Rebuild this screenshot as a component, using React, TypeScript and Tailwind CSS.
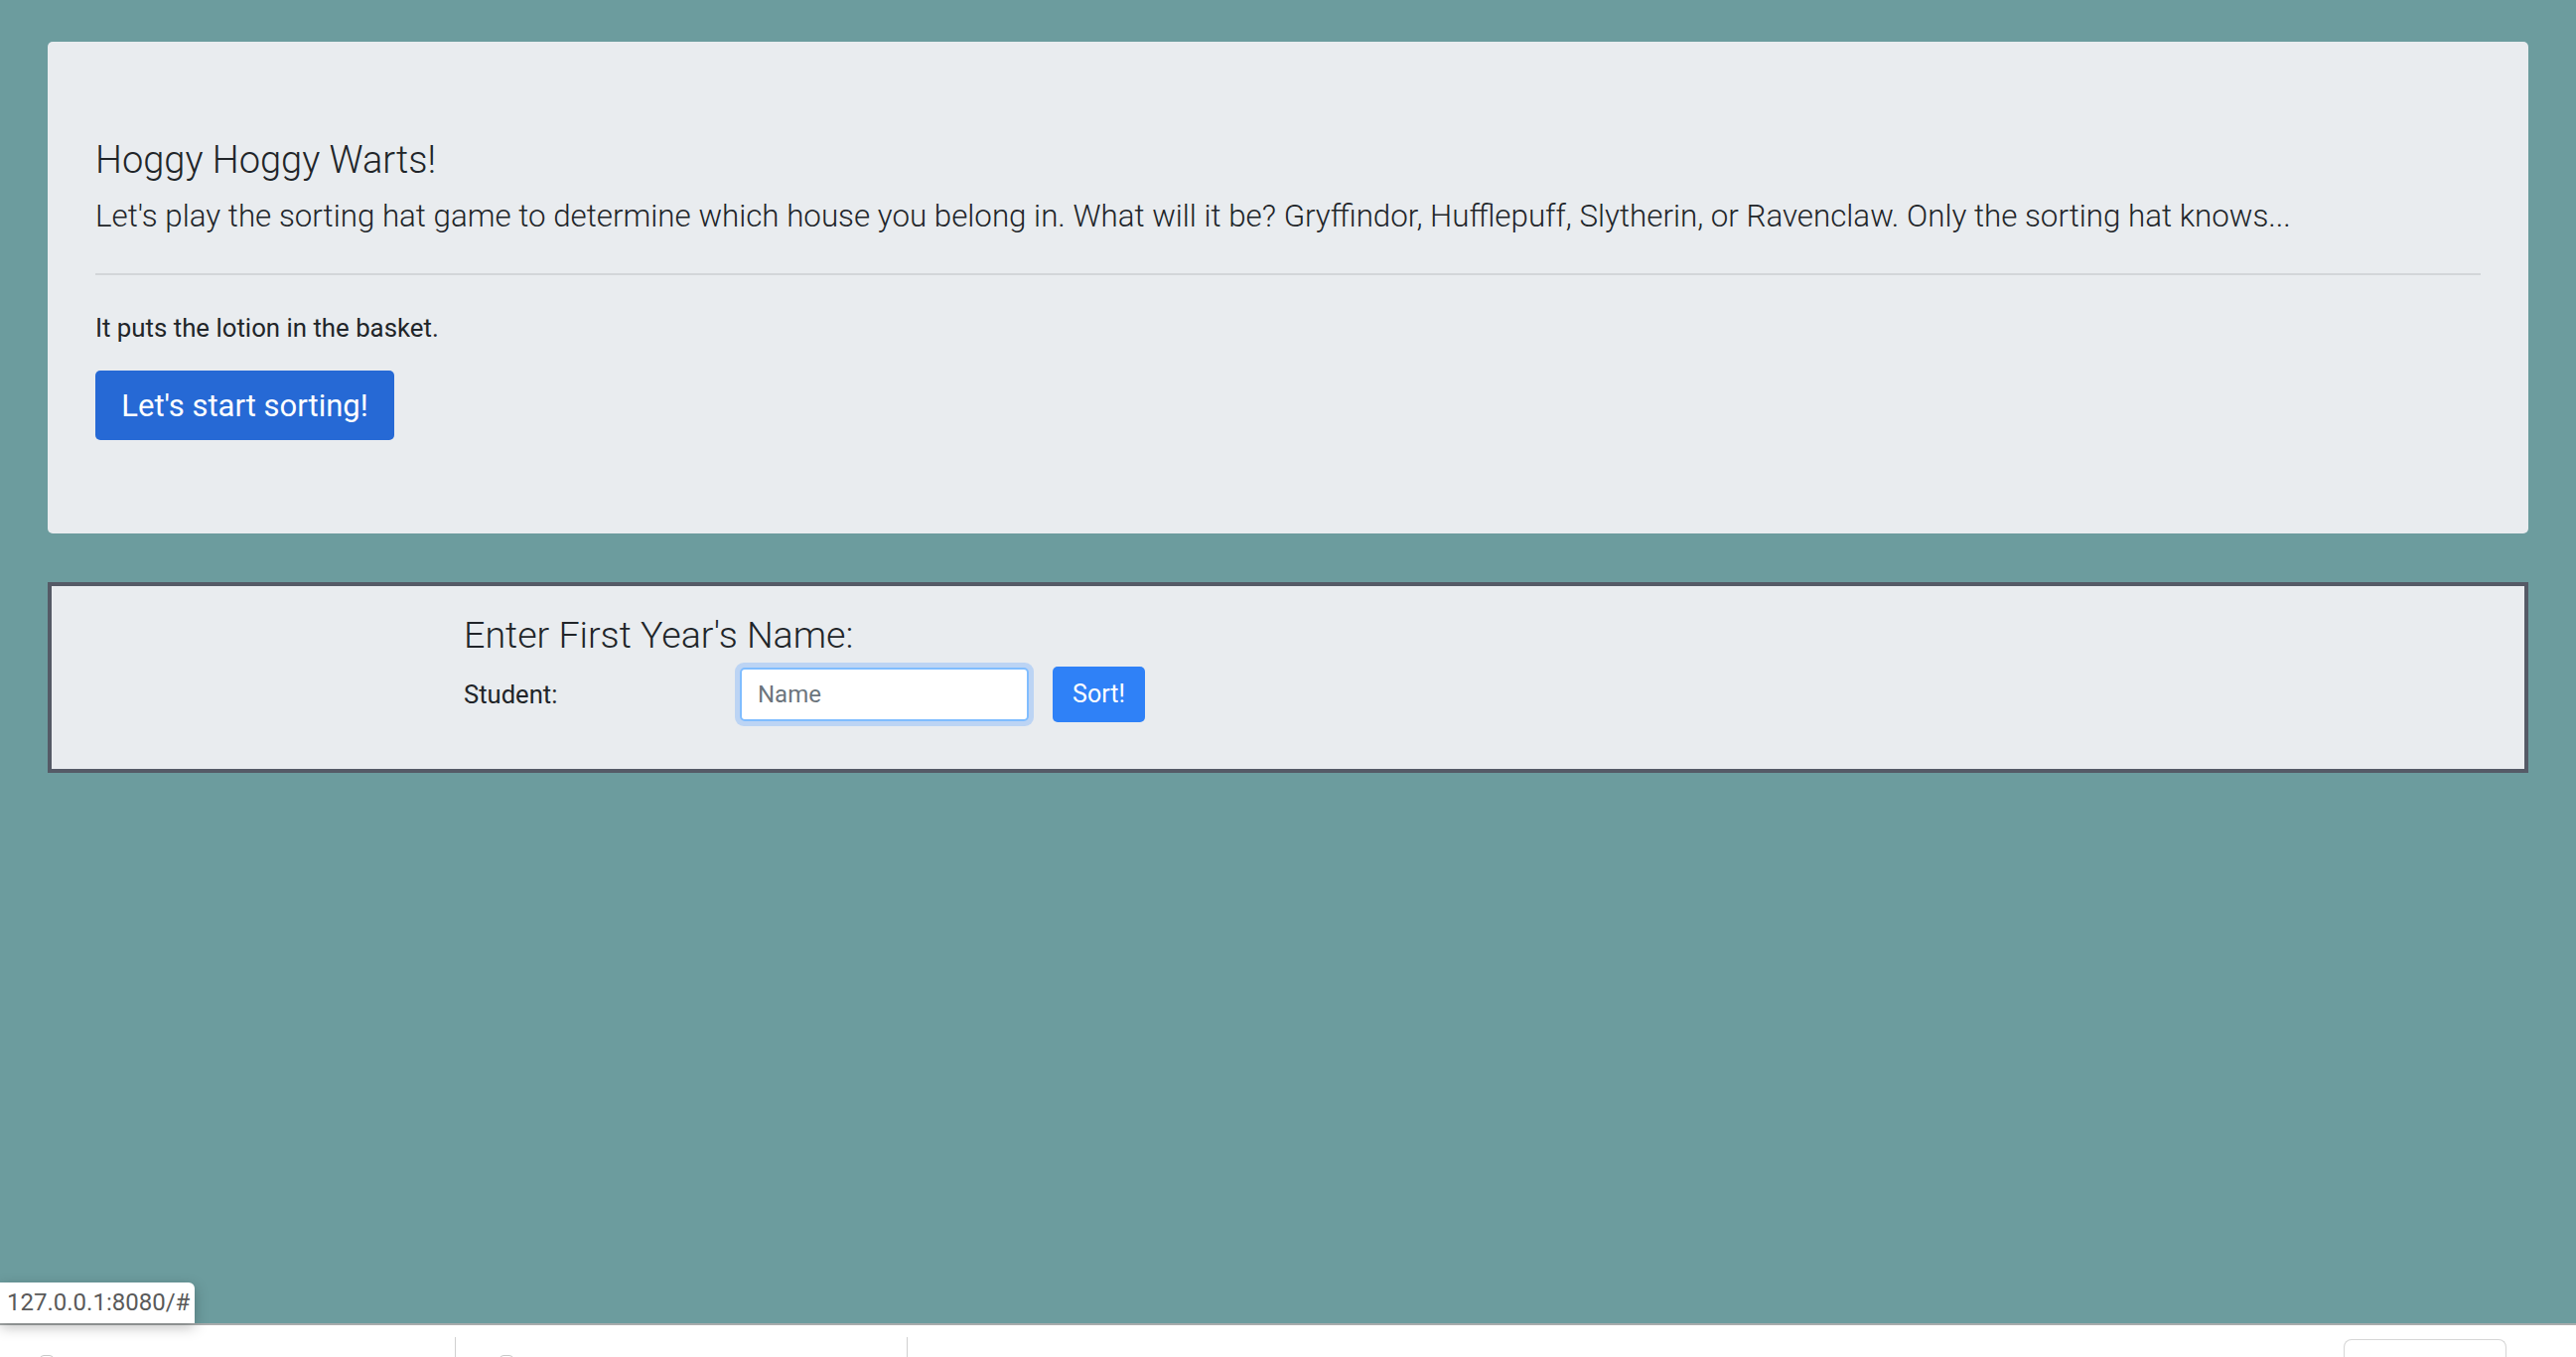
import React from "react";

const font = { fontFamily: "Roboto, 'Liberation Sans', sans-serif" };

const Jumbotron = () => {
  return (
    <div className="bg-[#e9ecef] rounded-[5px] h-[495px] px-[48px] pt-[97px]">
      <h1 className="text-[38px] leading-[44px] font-light text-[#212529]">Hoggy Hoggy Warts!</h1>
      <p className="mt-[10px] text-[31.3px] leading-[50px] font-light text-[#212529]">
        Let's play the sorting hat game to determine which house you belong in. What will it be? Gryffindor,
        Hufflepuff, Slytherin, or Ravenclaw. Only the sorting hat knows...
      </p>
      <hr className="mt-[32px] border-t-2 border-[#d3d6d9]" />
      <p className="mt-[34px] text-[25.8px] leading-[39px] text-[#212529]">It puts the lotion in the basket.</p>
      <button className="mt-[23px] h-[70px] w-[301px] rounded-[5px] bg-[#2669d5] pt-[2px] text-white text-[31px] flex items-center justify-center">
        Let's start sorting!
      </button>
    </div>
  );
};

const SortForm = () => {
  return (
    <div className="mt-[49px] h-[192px] border-4 border-[#555a66] bg-[#e9ecef] pl-[415px] pt-[28px]">
      <h3 className="text-[37.6px] leading-[43px] font-light text-[#212529]">Enter First Year's Name:</h3>
      <div className="mt-[6px] flex items-center">
        <label className="w-[273px] text-[25.6px] text-[#212529]">Student:</label>
        <div className="rounded-[9px] bg-[#bcd4f4] p-[5px]">
          <input
            className="h-[54px] w-[291px] rounded-[5px] border-2 border-[#80bdff] bg-white px-[16px] text-[24px] text-[#495057] placeholder:text-[#6c757d] outline-none"
            placeholder="Name"
            style={font}
          />
        </div>
        <button className="ml-[19px] h-[56px] w-[93px] rounded-[5px] bg-[#2f81f7] text-white text-[25px]" style={font}>
          Sort!
        </button>
      </div>
    </div>
  );
};

const BottomBar = () => {
  return (
    <div className="relative h-[34px] border-t-2 border-[#a8acac] bg-white flex">
      <div className="w-[459px] border-r border-[#d0d0d0] mt-[12px] pl-[40px]">
        <div className="mt-[18px] h-[6px] w-[14px] rounded-t-[4px] border border-[#c8c8c8]" />
      </div>
      <div className="w-[455px] border-r border-[#d0d0d0] mt-[12px] pl-[44px]">
        <div className="mt-[18px] h-[6px] w-[14px] rounded-t-[4px] border border-[#c8c8c8]" />
      </div>
      <div className="flex-1" />
      <div className="mr-[70px] mt-[14px] w-[164px] rounded-t-[8px] border border-b-0 border-[#d6d6d6]" />
    </div>
  );
};

export default function App() {
  return (
    <div className="relative h-[1366px] overflow-hidden flex flex-col bg-[#6c9c9e]" style={font}>
      <main className="flex-1 px-[48px] pt-[42px]">
        <Jumbotron />
        <SortForm />
      </main>
      <BottomBar />
      <div className="absolute left-0 top-[1291px] h-[41px] w-[196px] rounded-tr-[6px] bg-white pl-[7px] text-[24px] leading-[41px] text-[#5a5a5a] shadow-[0_4px_14px_rgba(0,0,0,0.25)]">
        127.0.0.1:8080/#
      </div>
    </div>
  );
}
